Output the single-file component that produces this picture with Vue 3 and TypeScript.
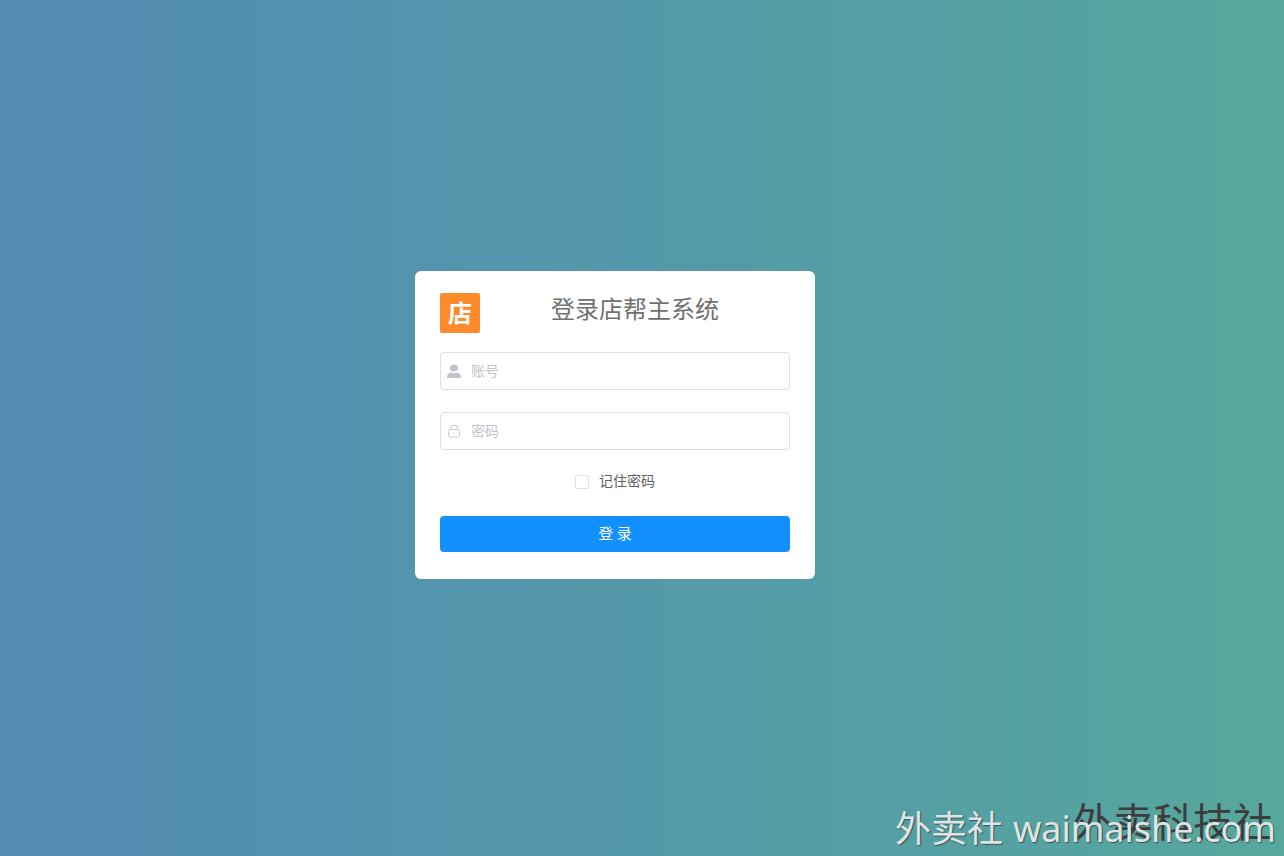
<script setup lang="ts">
import { ref } from 'vue'

const account = ref<string>('')
const password = ref<string>('')
const remember = ref<boolean>(false)
</script>

<template>
  <main class="page">
    <form class="card" @submit.prevent>
      <header class="head">
        <span class="logo">店</span>
        <h1 class="title">登录店帮主系统</h1>
      </header>
      <div class="field">
        <svg class="icon" viewBox="0 0 14 14" aria-hidden="true">
          <ellipse cx="7" cy="4" rx="4.1" ry="3.6" fill="#c0c4cc" />
          <path d="M0 14C-0.200 11 1.200 9.200 4.200 8.500Q7 9.600 9.800 8.500C12.800 9.200 14.200 11 14 14Z" fill="#c0c4cc" />
        </svg>
        <input v-model="account" class="input" type="text" placeholder="账号" aria-label="账号" />
      </div>
      <div class="field">
        <svg class="icon" viewBox="0 0 14 14" aria-hidden="true" fill="none" stroke="#c6cad1">
          <rect x="1.500" y="5.500" width="11" height="7.500" rx="2" />
          <path d="M3.500 5.500V4.500a3.500 3.500 0 0 1 7 0v1" />
          <path d="M7 8.500v1.500" />
        </svg>
        <input v-model="password" class="input" type="password" placeholder="密码" aria-label="密码" />
      </div>
      <label class="remember">
        <input v-model="remember" class="check" type="checkbox" />
        <span class="remember-text">记住密码</span>
      </label>
      <button class="submit" type="submit">登 录</button>
    </form>
    <div class="mark mark-dark">外卖科技社</div>
    <div class="mark mark-light"><span>外卖社</span><span>waimaishe.com</span></div>
  </main>
</template>

<style>
body {
  margin: 0;
}
</style>

<style scoped>
.page {
  position: relative;
  display: flex;
  align-items: center;
  justify-content: center;
  box-sizing: border-box;
  min-height: 100vh;
  padding: 0 54px 6px 0;
  overflow: hidden;
  background: linear-gradient(to right, #538bb4, #5499a9 50%, #56a89d);
  font-family: "Noto Sans CJK SC", sans-serif;
}

.card {
  box-sizing: border-box;
  width: 400px;
  max-width: 100%;
  padding: 22px 25px 27px;
  border-radius: 6px;
  background: #fff;
}

.head {
  display: flex;
  margin-bottom: 19px;
}

.logo {
  width: 40px;
  height: 40px;
  border-radius: 2px;
  background: #ff8a2c;
  color: #fff;
  font-size: 24px;
  font-weight: 700;
  line-height: 38px;
  text-align: center;
}

.title {
  flex: 1;
  margin: 0;
  color: #707070;
  font-size: 24px;
  font-weight: 400;
  line-height: 30px;
  text-align: center;
}

.field {
  display: flex;
  align-items: center;
  box-sizing: border-box;
  height: 38px;
  margin-bottom: 22px;
  padding: 0 6px;
  border: 1px solid #dcdfe6;
  border-radius: 4px;
}

.field:focus-within {
  border-color: #1390ff;
}

.icon {
  flex: none;
  width: 14px;
  height: 14px;
}

.input {
  flex: 1;
  box-sizing: border-box;
  min-width: 0;
  height: 36px;
  margin: 0;
  padding: 0 0 2px 10px;
  border: 0;
  outline: 0;
  background: transparent;
  color: #606266;
  font-family: inherit;
  font-size: 14px;
}

.input::placeholder {
  color: #c0c4cc;
  opacity: 1;
}

.remember {
  display: flex;
  align-items: center;
  justify-content: center;
  gap: 10px;
  height: 20px;
  margin-bottom: 24px;
  color: #606266;
  font-size: 14px;
  line-height: 20px;
}

.remember-text {
  padding-bottom: 4px;
}

.check {
  appearance: none;
  box-sizing: border-box;
  width: 14px;
  height: 14px;
  margin: 0;
  border: 1px solid #dcdfe6;
  border-radius: 2px;
  background: #fff;
}

.check:checked {
  border-color: #1390ff;
  background: #1390ff;
}

.submit {
  display: block;
  width: 100%;
  height: 36px;
  padding: 0 0 2px;
  border: 0;
  border-radius: 4px;
  background: #1390ff;
  color: #fff;
  font-family: inherit;
  font-size: 15px;
  line-height: 34px;
}

.mark {
  position: absolute;
  white-space: nowrap;
  pointer-events: none;
}

.mark-dark {
  right: 11px;
  bottom: 12px;
  color: #3c3c3c;
  font-size: 40px;
  line-height: 48px;
}

.mark-light {
  display: flex;
  gap: 10px;
  right: 8px;
  bottom: 3px;
  color: #dfe5e4;
  font-family: "Noto Sans", "Noto Sans CJK SC", sans-serif;
  font-size: 36px;
  line-height: 48px;
  text-shadow: 1px 1px 1px #3c5555;
}
</style>
